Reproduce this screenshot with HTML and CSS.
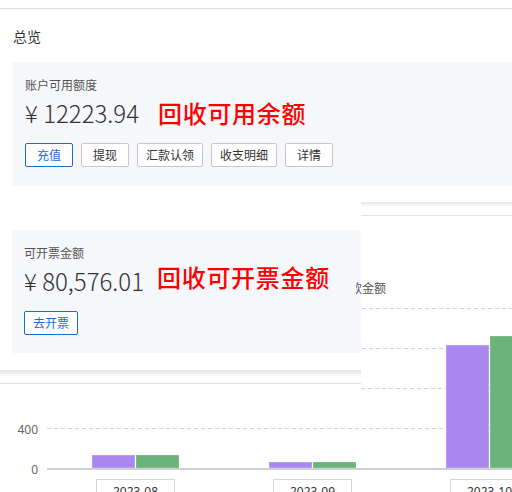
FILE: index.html
```html
<!DOCTYPE html>
<html lang="zh-CN">
<head>
<meta charset="utf-8">
<title>总览</title>
<link rel="stylesheet" href="styles.css">
</head>
<body>
<div class="page">
  <section class="overview">
    <h2 class="title">总览</h2>
    <div class="card card-wide">
      <div class="label">账户可用额度</div>
      <div class="amount-row">
        <span class="amount">¥ 12223.94</span>
        <span class="note">回收可用余额</span>
      </div>
      <div class="actions">
        <button class="btn primary">充值</button>
        <button class="btn">提现</button>
        <button class="btn">汇款认领</button>
        <button class="btn">收支明细</button>
        <button class="btn">详情</button>
      </div>
    </div>
  </section>

  <section class="chart">
    <div class="chart-head"></div>
    <div class="chart-title"><span class="clip">回款金额</span></div>
    <div class="plot">
      <div class="yaxis">
        <span class="tick"></span>
        <span class="tick"></span>
        <span class="tick"></span>
        <span class="tick">400</span>
        <span class="tick">0</span>
      </div>
      <div class="area">
        <div class="grid">
          <i class="line"></i>
          <i class="line"></i>
          <i class="line partial"></i>
          <i class="line"></i>
          <i class="axis"></i>
        </div>
        <div class="cols">
          <div class="col"><b class="bar purple" style="height:13px"></b><b class="bar green" style="height:13px"></b></div>
          <div class="col"><b class="bar purple" style="height:6px"></b><b class="bar green" style="height:6px"></b></div>
          <div class="col"><b class="bar purple" style="height:123px"></b><b class="bar green" style="height:132px"></b></div>
        </div>
        <div class="xaxis">
          <div class="xcell"><span class="xlabel">2023-08</span></div>
          <div class="xcell"><span class="xlabel">2023-09</span></div>
          <div class="xcell"><span class="xlabel">2023-10</span></div>
        </div>
      </div>
    </div>
  </section>

  <div class="overlay">
    <div class="card card-short">
      <div class="label">可开票金额</div>
      <div class="amount-row">
        <span class="amount">¥ 80,576.01</span>
        <span class="note raised">回收可开票金额</span>
      </div>
      <div class="actions">
        <button class="btn primary">去开票</button>
      </div>
    </div>
    <div class="fade"></div>
  </div>
</div>
</body>
</html>
```
FILE: styles.css
```css
* { box-sizing: border-box; }
html, body { margin: 0; padding: 0; background: #fff; }
body {
  font-family: "Noto Sans CJK SC", "Noto Sans", sans-serif;
  color: #333;
}
.page {
  position: relative;
  width: 512px;
  height: 492px;
  overflow: hidden;
  background: #fff;
}

/* ---------- overview ---------- */
.overview {
  height: 192px;
  margin-top: 8px;
  border-top: 1px solid #dedede;
  box-shadow: inset 0 1px 1px rgba(0,0,0,0.04);
}
.title {
  margin: 17px 0 0 13px;
  font-size: 14px;
  font-weight: normal;
  line-height: 20px;
  color: #333;
}
.card {
  background: #f5f7fa;
  padding: 16px 0 0 12px;
}
.card-wide {
  margin: 16px 0 0 13px;
  height: 124px;
}
.label {
  font-size: 12px;
  line-height: 14px;
  color: #555;
}
.amount-row {
  display: flex;
  align-items: center;
  margin-top: 6px;
  height: 30px;
}
.amount {
  font-size: 24px;
  font-weight: 300;
  line-height: 30px;
  color: #333;
  width: 133px;
  white-space: nowrap;
}
.note {
  font-size: 24px;
  line-height: 30px;
  letter-spacing: 0.7px;
  color: #f00;
  font-weight: 500;
  white-space: nowrap;
}
.note.raised { margin-bottom: 8px; }
.actions {
  display: flex;
  gap: 8px;
  margin-top: 15px;
}
.btn {
  font-family: inherit;
  font-size: 12px;
  height: 24px;
  min-width: 48px;
  padding: 0 8px;
  border: 1px solid #c6c8cc;
  border-radius: 2px;
  background: #fff;
  color: #333;
  line-height: 22px;
  cursor: pointer;
}
.btn.primary {
  border-color: #1a6dd0;
  color: #1a6dd0;
}

/* ---------- chart ---------- */
.chart-head {
  margin-top: 2px;
  height: 14px;
  background: linear-gradient(#e4e4e4, #fff 5px);
  border-bottom: 1px solid #e2e2e2;
}
.chart-title {
  position: relative;
  z-index: 2;
  margin-top: 65px;
  padding-left: 356px;
  font-size: 12px;
  line-height: 14px;
  color: #555;
  height: 14px;
}
.clip {
  display: inline-block;
  width: 34px;
  overflow: hidden;
  white-space: nowrap;
  text-indent: -18px;
}
.plot {
  display: grid;
  grid-template-columns: 47px 1fr;
  margin-top: 13px;
}
.yaxis {
  height: 162px;
  display: flex;
  flex-direction: column;
  justify-content: space-between;
  align-items: flex-end;
  padding-right: 9px;
}
.tick {
  display: block;
  height: 1px;
  line-height: 1px;
  font-size: 12px;
  color: #666;
  font-family: "Noto Sans", sans-serif;
}
.area {
  position: relative;
}
.grid {
  position: absolute;
  left: 0;
  right: 0;
  top: 0;
  height: 162px;
  display: flex;
  flex-direction: column;
  justify-content: space-between;
}
.line {
  display: block;
  height: 1px;
  background: repeating-linear-gradient(to right, #d3d3d3 0 4px, transparent 4px 7px);
}
.line.partial { margin-left: 314px; }
.axis {
  display: block;
  height: 2px;
  background: #d0d0d0;
}
.cols {
  position: relative;
  display: grid;
  grid-template-columns: repeat(3, 177px);
  height: 160px;
}
.col {
  display: flex;
  justify-content: center;
  align-items: flex-end;
  gap: 1px;
}
.bar {
  display: block;
  width: 43px;
}
.purple { background: #a987ef; box-shadow: inset 0 0 0 1px #b79cf3; }
.green { background: #6bb27b; box-shadow: inset 0 0 0 1px #7cbd8a; }
.xaxis {
  display: grid;
  grid-template-columns: repeat(3, 177px);
  margin-top: 11px;
}
.xcell {
  display: flex;
  justify-content: center;
}
.xlabel {
  display: block;
  width: 79px;
  height: 30px;
  border: 1px solid #d6d6d6;
  padding-top: 5px;
  text-align: center;
  font-size: 12px;
  line-height: 14px;
  color: #333;
  font-family: "Noto Sans", sans-serif;
  background: #fff;
}

/* ---------- overlay panel ---------- */
.overlay {
  position: absolute;
  z-index: 1;
  left: 0;
  top: 196px;
  width: 361px;
  height: 188px;
  background: #fff;
  border-bottom: 1px solid #e0e0e0;
  padding-top: 34px;
}
.card-short {
  margin-left: 12px;
  height: 123px;
}
.fade {
  margin-top: 17px;
  height: 7px;
  background: linear-gradient(#e2e2e2, #fff);
}
```
